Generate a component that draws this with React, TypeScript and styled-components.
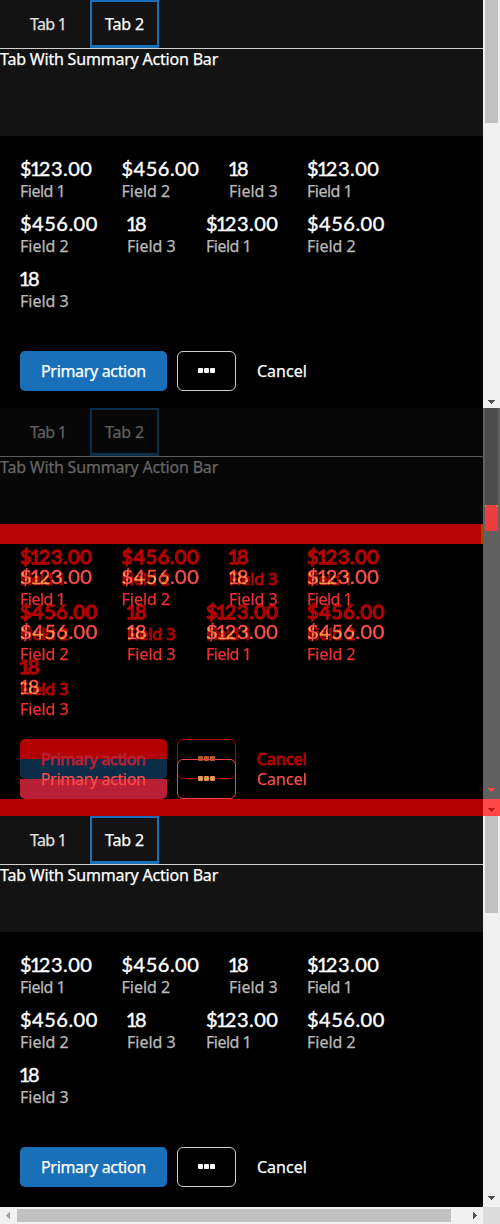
import React from 'react';
import styled, { createGlobalStyle, css } from 'styled-components';

const GlobalStyle = createGlobalStyle`
  * { box-sizing: border-box; }
  body { margin: 0; background: #000; }
`;

type Tone = 'normal' | 'added' | 'removed' | 'overlap';

const tones = {
  normal: { text: '#fff', label: '#b9bab9', line: '#d0d0d0', button: '#1a70b8', buttonText: '#fff' },
  added: { text: '#ff4b4b', label: '#f03030', line: '#ff4040', button: 'linear-gradient(transparent 20px, #b82035 20px)', buttonText: '#ff4b4b' },
  removed: { text: '#b30000', label: '#b30000', line: '#b30000', button: 'linear-gradient(#b30000 20px, #0b2d48 20px)', buttonText: '#b82035' },
  overlap: { text: 'transparent', label: '#008a00', line: 'transparent', button: 'transparent', buttonText: 'transparent' },
};

const Screen = styled.main`
  width: 500px;
  font: 16px/22px 'Noto Sans', sans-serif;
  -webkit-text-stroke: 0.25px;
`;

const Pane = styled.section`
  display: flex;
  width: 500px;
  height: 408px;
  overflow: hidden;
  background: #000;
`;

const Content = styled.div`
  width: 483px;
  height: 408px;
  display: flex;
  flex-direction: column;
  overflow: hidden;
`;

const Header = styled.div<{ $dim?: boolean; $height: number }>`
  height: ${p => p.$height}px;
  flex: none;
  background: ${p => (p.$dim ? '#070707' : '#131313')};
  color: ${p => (p.$dim ? '#666' : '#fff')};
`;

const TabBar = styled.div<{ $dim?: boolean }>`
  display: flex;
  height: 49px;
  padding-left: 15px;
  border-bottom: 1px solid ${p => (p.$dim ? '#5c5c5c' : '#d0d0d0')};
`;

const Tab = styled.div<{ $active?: boolean; $dim?: boolean }>`
  height: 48px;
  width: ${p => (p.$active ? 69 : 75)}px;
  padding: ${p => (p.$active ? '11px 0 0 13px' : '13px 0 0 15px')};
  white-space: nowrap;
  letter-spacing: ${p => (p.$active ? -0.15 : -0.7)}px;
  color: ${p => (p.$dim ? '#606060' : p.$active ? '#fff' : '#e0e0e0')};
  ${p => p.$active && css`
    border: 2px solid ${p.$dim ? '#0b2d48' : '#1a70b8'};
    border-bottom-width: 3px;
  `}
`;

const Caption = styled.div`
  line-height: 20px;
  white-space: nowrap;
  letter-spacing: -0.2px;
`;

const Summary = styled.div<{ $tone: Tone; $height: number }>`
  padding: 22px 20px 0;
  height: ${p => p.$height}px;
  flex: none;
  color: ${p => tones[p.$tone].text};
`;

const FieldRow = styled.div`
  display: flex;
  height: 55px;
`;

const Field = styled.div<{ $width: number }>`
  width: ${p => p.$width}px;
  flex: none;
  white-space: nowrap;
`;

const Value = styled.div<{ $tone: Tone }>`
  height: 22px;
  font: 400 20px/20px Lato, sans-serif;
  letter-spacing: 0.5px;
  color: ${p => tones[p.$tone].text};
  -webkit-text-stroke: ${p => (p.$tone === 'removed' ? '1.4px' : p.$tone === 'overlap' ? '0' : '0.4px')};
`;

const NarrowDigit = styled.span<{ $first: boolean }>`
  margin: 0 -3px 0 ${p => (p.$first ? -1.2 : -2.4)}px;
`;

const Label = styled.div<{ $tone: Tone; $narrow: boolean }>`
  color: ${p => tones[p.$tone].label};
  letter-spacing: ${p => (p.$narrow ? -0.5 : 0)}px;
  -webkit-text-stroke: ${p => (p.$tone === 'removed' || p.$tone === 'overlap' ? '1px' : '0.25px')};
`;

const Actions = styled.div`
  display: flex;
  gap: 10px;
  margin-top: 28px;
`;

const PrimaryButton = styled.div<{ $tone: Tone }>`
  width: 147px;
  height: 40px;
  padding-left: 21px;
  border-radius: 5px;
  line-height: 40px;
  letter-spacing: -0.33px;
  white-space: nowrap;
  color: ${p => tones[p.$tone].buttonText};
  background: ${p => tones[p.$tone].button};
  -webkit-text-stroke: ${p => (p.$tone === 'removed' ? '1px' : '0.25px')};
`;

const MoreButton = styled.div<{ $tone: Tone }>`
  width: 59px;
  height: 40px;
  border: 1px solid ${p => tones[p.$tone].line};
  border-radius: 6px;
  display: flex;
  gap: 1px;
  align-items: center;
  justify-content: center;
`;

const Dot = styled.i<{ $tone: Tone }>`
  width: 5px;
  height: 5px;
  margin-bottom: 1px;
  border-radius: 1px;
  background: ${p => (p.$tone === 'added' ? '#e29a52' : p.$tone === 'removed' ? '#b35a20' : tones[p.$tone].text)};
`;

const Cancel = styled.div<{ $tone: Tone }>`
  padding-left: 11px;
  line-height: 40px;
  -webkit-text-stroke: ${p => (p.$tone === 'removed' ? '1px' : '0.25px')};
`;

const Track = styled.div<{ $changed?: boolean; $height: number }>`
  width: 17px;
  height: ${p => p.$height}px;
  flex: none;
  display: flex;
  flex-direction: column;
  align-items: center;
  justify-content: space-between;
  background: ${p => (p.$changed ? '#606060' : '#f1f1f1')};
`;

const Thumb = styled.div<{ $height: number; $changed?: boolean }>`
  width: 13px;
  height: ${p => p.$height}px;
  background: ${p => (p.$changed ? '#4c4c4c' : '#c1c1c1')};
`;

const ChangedThumb = styled.div`
  width: 13px;
  height: 26px;
  background:
    linear-gradient(#c07f38 0 0) 0 0 / 2px 2px no-repeat,
    linear-gradient(#c07f38 0 0) 100% 0 / 2px 2px no-repeat,
    #ee3b3b;
`;

const ArrowBox = styled.svg<{ $gap: number }>`
  display: block;
  width: 17px;
  height: 12px;
  margin-bottom: ${p => p.$gap}px;
`;

const DownArrow = ({ color = '#505050', gap = 0 }: { color?: string; gap?: number }) => (
  <ArrowBox $gap={gap} viewBox="0 0 17 12" shapeRendering="crispEdges">
    <path d="M5 4H12V5H11V6H10V7H9V8H8V7H7V6H6V5H5Z" fill={color} />
  </ArrowBox>
);

const Compare = styled.div`
  display: grid;
  grid-template-rows: 283px;
  height: 283px;
  flex: none;
  overflow: hidden;
  isolation: isolate;
  background: linear-gradient(#070707 0 8px, #b70404 8px 28px, #000 28px);
`;

const Layer = styled.div<{ $blend?: boolean; $offset: number }>`
  grid-area: 1 / 1;
  width: 483px;
  padding-top: ${p => p.$offset}px;
  mix-blend-mode: ${p => (p.$blend ? 'color-dodge' : 'normal')};
`;

const BandEnd = styled.div`
  grid-area: 1 / 1;
  justify-self: end;
  width: 2px;
  height: 20px;
  margin-top: 8px;
  background: #944c00;
`;

const RedStrip = styled.div`
  height: 17px;
  flex: none;
  background: #b30000;
`;

const TrackFoot = styled.div`
  height: 17px;
  padding-top: 5px;
  background: #ff4848;
`;

const FootGroup = styled.div`
  width: 17px;
  display: flex;
  flex-direction: column;
`;

const BottomScroll = styled.div`
  height: 17px;
  width: 483px;
  flex: none;
  background: #f1f1f1;
  display: flex;
  align-items: center;
`;

const HorizontalThumb = styled.div`
  width: 434px;
  height: 13px;
  margin-right: 15px;
  background: #c1c1c1;
`;

const SideArrow = styled.svg`
  width: 17px;
  height: 17px;
  flex: none;
`;

const ScrollCorner = styled.div`
  width: 17px;
  height: 17px;
  background: #dcdcdc;
`;

const rows = [
  [['$123.00', 'Field 1', 101.5], ['$456.00', 'Field 2', 107.5], ['18', 'Field 3', 78], ['$123.00', 'Field 1', 90]],
  [['$456.00', 'Field 2', 107], ['18', 'Field 3', 79], ['$123.00', 'Field 1', 101], ['$456.00', 'Field 2', 90]],
  [['18', 'Field 3', 90]],
] as [string, string, number][][];

const Amount = ({ value }: { value: string }) => {
  const parts = value.split('1');
  return parts.length > 1
    ? <>{parts[0]}<NarrowDigit $first={parts[0] === ''}>1</NarrowDigit>{parts[1]}</>
    : <>{value}</>;
};

const SummaryBar = ({ tone = 'normal', height = 272 }: { tone?: Tone; height?: number }) => (
  <Summary $tone={tone} $height={height}>
    {rows.map((row, i) => (
      <FieldRow key={i}>
        {row.map(([value, label, width], j) => (
          <Field key={j} $width={width}>
            <Value $tone={tone}><Amount value={value} /></Value>
            <Label $tone={tone} $narrow={label.endsWith('1')}>{label}</Label>
          </Field>
        ))}
      </FieldRow>
    ))}
    <Actions>
      <PrimaryButton $tone={tone}>Primary action</PrimaryButton>
      <MoreButton $tone={tone}>
        <Dot $tone={tone} /><Dot $tone={tone} /><Dot $tone={tone} />
      </MoreButton>
      <Cancel $tone={tone}>Cancel</Cancel>
    </Actions>
  </Summary>
);

/* Only the field texts: tints the places where old labels cross new values. */
const CrossedFields = () => (
  <Summary $tone="overlap" $height={272}>
    {rows.map((row, i) => (
      <FieldRow key={i}>
        {row.map(([, label, width], j) => (
          <Field key={j} $width={width}>
            <Value $tone="overlap" />
            <Label $tone="overlap" $narrow={label.endsWith('1')}>{label}</Label>
          </Field>
        ))}
      </FieldRow>
    ))}
  </Summary>
);

const PageHeader = ({ dim, height }: { dim?: boolean; height: number }) => (
  <Header $dim={dim} $height={height}>
    <TabBar $dim={dim}>
      <Tab $dim={dim}>Tab 1</Tab>
      <Tab $active $dim={dim}>Tab 2</Tab>
    </TabBar>
    <Caption>Tab With Summary Action Bar</Caption>
  </Header>
);

export default function App() {
  return (
    <Screen>
      <GlobalStyle />
      <Pane>
        <Content>
          <PageHeader height={136} />
          <SummaryBar />
        </Content>
        <Track $height={408}>
          <Thumb $height={123} />
          <DownArrow />
        </Track>
      </Pane>

      <Pane>
        <Content>
          <PageHeader dim height={108} />
          <Compare>
            <BandEnd />
            <Layer $offset={8}><SummaryBar tone="removed" /></Layer>
            <Layer $offset={28}><SummaryBar tone="added" /></Layer>
            <Layer $offset={8} $blend><CrossedFields /></Layer>
          </Compare>
          <RedStrip />
        </Content>
        <Track $changed $height={408}>
          <div>
            <Thumb $changed $height={97} />
            <ChangedThumb />
          </div>
          <FootGroup>
            <DownArrow color="#ff4848" gap={3} />
            <TrackFoot><DownArrow color="#c01818" /></TrackFoot>
          </FootGroup>
        </Track>
      </Pane>

      <Pane>
        <Content>
          <PageHeader height={116} />
          <SummaryBar height={275} />
          <BottomScroll>
            <SideArrow viewBox="0 0 17 17" shapeRendering="crispEdges">
              <path d="M10 5V12H9V11H8V10H7V9H6V8H7V7H8V6H9V5Z" fill="#a3a3a3" />
            </SideArrow>
            <HorizontalThumb />
            <SideArrow viewBox="0 0 17 17" shapeRendering="crispEdges">
              <path d="M7 5V12H8V11H9V10H10V9H11V8H10V7H9V6H8V5Z" fill="#505050" />
            </SideArrow>
          </BottomScroll>
        </Content>
        <div>
          <Track $height={391}>
            <Thumb $height={97} />
            <DownArrow gap={3} />
          </Track>
          <ScrollCorner />
        </div>
      </Pane>
    </Screen>
  );
}
